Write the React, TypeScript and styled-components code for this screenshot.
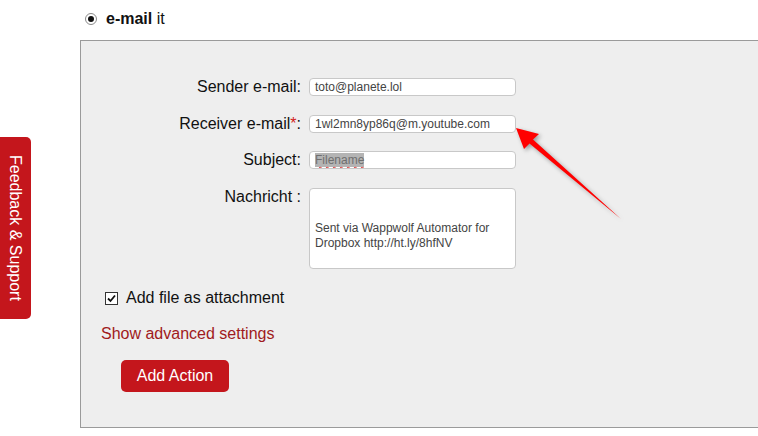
import React from "react";
import styled, { createGlobalStyle } from "styled-components";

const GlobalStyle = createGlobalStyle`
  html, body { margin: 0; padding: 0; background: #fff; overflow: hidden; }
  body { font-family: "Liberation Sans", Arial, sans-serif; color: #111; }
  * { box-sizing: border-box; }
`;

const Page = styled.div`
  position: relative;
  width: 758px;
  height: 436px;
  overflow: hidden;
`;

const FeedbackTab = styled.div`
  position: absolute;
  left: 0;
  top: 137px;
  width: 31px;
  height: 182px;
  background: #c4161c;
  color: #fff;
  border-radius: 0 5px 5px 0;
  writing-mode: vertical-rl;
  display: flex;
  align-items: center;
  justify-content: center;
  font-size: 16px;
  line-height: 18px;
  padding-right: 2px;
`;

const Header = styled.div`
  display: flex;
  align-items: center;
  gap: 9px;
  height: 18px;
  margin: 10px 0 12px 85px;
  font-size: 16px;
  line-height: 18px;
`;

const Radio = styled.span`
  width: 12px;
  height: 12px;
  border-radius: 50%;
  border: 1px solid #8a8a8a;
  background: #fff;
  display: flex;
  align-items: center;
  justify-content: center;
  &::after {
    content: "";
    width: 6px;
    height: 6px;
    border-radius: 50%;
    background: #111;
  }
`;

const Bold = styled.b`
  font-weight: bold;
`;

const Panel = styled.div`
  margin-left: 80px;
  width: 720px;
  height: 388px;
  border: 1px solid #9a9a9a;
  background: #eeeeee;
  padding: 37px 0 0 0;
`;

const FormGrid = styled.div`
  display: grid;
  grid-template-columns: 220px 207px;
  column-gap: 8px;
  row-gap: 18.7px;
  align-items: start;
`;

const Label = styled.label`
  text-align: right;
  font-size: 16px;
  line-height: 18px;
  color: #111;
`;

const Req = styled.span`
  color: #d21a1a;
`;

const Field = styled.div`
  height: 18px;
  background: #fff;
  border: 1px solid #c8c8c8;
  border-radius: 4px;
  padding: 0 5px;
  font-size: 12px;
  line-height: 16px;
  color: #444;
  white-space: nowrap;
  overflow: hidden;
`;

const Selected = styled.span`
  background: #b4b4b4;
  color: #6f6f6f;
  text-decoration: underline wavy #d83030;
  text-decoration-thickness: 1px;
  text-underline-offset: 2px;
`;

const Message = styled.div`
  height: 81px;
  background: #fff;
  border: 1px solid #c8c8c8;
  border-radius: 4px;
  padding: 2px 5px;
  font-size: 12px;
  line-height: 15px;
  color: #444;
  white-space: pre-wrap;
`;

const CheckRow = styled.div`
  display: flex;
  align-items: center;
  gap: 8px;
  height: 18px;
  margin: 20px 0 0 24px;
  font-size: 16px;
  line-height: 18px;
`;

const CheckBox = styled.span`
  width: 13px;
  height: 13px;
  border: 1px solid #333;
  background: #fff;
  display: flex;
  align-items: center;
  justify-content: center;
`;

const AdvancedLink = styled.a`
  display: block;
  margin: 18px 0 0 20px;
  font-size: 16px;
  line-height: 18px;
  color: #a01a20;
  text-decoration: none;
`;

const AddButton = styled.button`
  display: flex;
  align-items: center;
  justify-content: center;
  margin: 17px 0 0 40px;
  width: 108px;
  height: 32px;
  border: none;
  border-radius: 5px;
  background: #c4161c;
  color: #fff;
  font-family: "Liberation Sans", Arial, sans-serif;
  font-size: 16px;
  padding: 0;
`;

const ArrowLayer = styled.svg`
  position: absolute;
  left: 0;
  top: 0;
  pointer-events: none;
  filter: drop-shadow(2px 2px 2px rgba(0, 0, 0, 0.35));
`;

export default function App() {
  return (
    <Page>
      <GlobalStyle />
      <Header>
        <Radio />
        <span>
          <Bold>e-mail</Bold> it
        </span>
      </Header>
      <Panel>
        <FormGrid>
          <Label>Sender e-mail:</Label>
          <Field>toto@planete.lol</Field>
          <Label>
            Receiver e-mail<Req>*</Req>:
          </Label>
          <Field>1wl2mn8yp86q@m.youtube.com</Field>
          <Label>Subject:</Label>
          <Field>
            <Selected>Filename</Selected>
          </Field>
          <Label>Nachricht :</Label>
          <Message>{"\n\nSent via Wappwolf Automator for Dropbox http://ht.ly/8hfNV"}</Message>
        </FormGrid>
        <CheckRow>
          <CheckBox>
            <svg width="9" height="9" viewBox="0 0 9 9">
              <path d="M1 4.5 L3.5 7 L8 1.5" fill="none" stroke="#111" strokeWidth="1.8" />
            </svg>
          </CheckBox>
          <span>Add file as attachment</span>
        </CheckRow>
        <AdvancedLink>Show advanced settings</AdvancedLink>
        <AddButton>Add Action</AddButton>
      </Panel>
      <FeedbackTab>Feedback &amp; Support</FeedbackTab>
      <ArrowLayer width="758" height="436" viewBox="0 0 758 436">
        <polygon
          points="516,128 539,134 533,139.5 621,219 529.5,143.5 524,149"
          fill="#f00"
        />
      </ArrowLayer>
    </Page>
  );
}
